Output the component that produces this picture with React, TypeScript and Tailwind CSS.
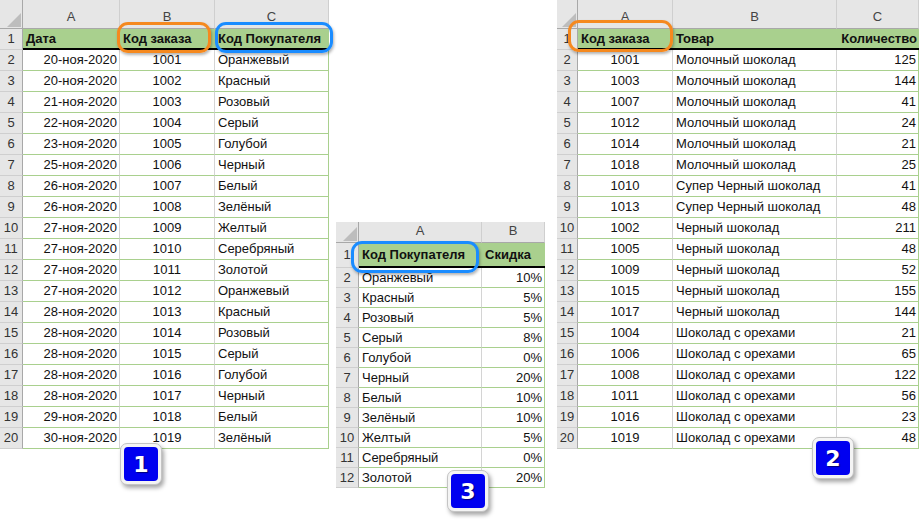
import type { ReactNode } from "react";

type Align = "l" | "c" | "r";
type Col = { letter: string; w: string; align: Align; head: Align };

const alignCls: Record<Align, string> = {
  l: "justify-start pl-[3px]",
  c: "justify-center",
  r: "justify-end pr-[2px]",
};

function cn(...a: (string | false | undefined)[]) {
  return a.filter(Boolean).join(" ");
}

function Sheet({
  numW,
  topH,
  headH,
  rowH,
  cols,
  head,
  rows,
  children,
}: {
  numW: string;
  topH: string;
  headH: string;
  rowH: string;
  cols: Col[];
  head: string[];
  rows: string[][];
  children?: ReactNode;
}) {
  return (
    <div className="relative flex flex-col text-[13px] text-[#111] font-['Liberation_Sans',Arial,sans-serif]">
      {/* column letters */}
      <div className={cn("flex", topH)}>
        <div className={cn("flex items-end justify-end p-[1px] bg-[#e6e6e6] border-r border-b border-[#a8a8a8]", numW)}>
          <svg width="14" height="14" viewBox="0 0 14 14">
            <polygon points="14,0 14,14 0,14" fill="#bdbdbd" />
          </svg>
        </div>
        {cols.map((c) => (
          <div
            key={c.letter}
            className={cn("flex items-end justify-center pb-[2px] bg-[#e6e6e6] border-r border-[#cfcfcf] border-b border-b-[#a8a8a8] text-[#444]", c.w)}
          >
            {c.letter}
          </div>
        ))}
      </div>
      {/* header row */}
      <div className={cn("flex", headH)}>
        <div className={cn("flex items-center justify-center bg-[#e6e6e6] border-r border-r-[#a8a8a8] border-b border-b-[#cfcfcf] text-[#333]", numW)}>
          1
        </div>
        {cols.map((c, i) => (
          <div
            key={c.letter}
            className={cn("flex items-center font-bold bg-[#a9d08e] border-b-2 border-black whitespace-nowrap", alignCls[c.head], c.w)}
          >
            {head[i]}
          </div>
        ))}
      </div>
      {/* data rows */}
      {rows.map((r, ri) => (
        <div key={ri} className={cn("flex", rowH)}>
          <div className={cn("flex items-center justify-center bg-[#e6e6e6] border-r border-r-[#a8a8a8] border-b border-b-[#cfcfcf] text-[#333]", numW)}>
            {ri + 2}
          </div>
          {cols.map((c, ci) => (
            <div
              key={c.letter}
              className={cn(
                "flex items-center border-b border-b-[#a9d08e] whitespace-nowrap",
                ci === cols.length - 1 ? "border-r border-r-[#a9d08e]" : "border-r border-r-[#d4d4d4]",
                alignCls[c.align],
                c.w
              )}
            >
              {r[ci]}
            </div>
          ))}
        </div>
      ))}
      {children}
    </div>
  );
}

function Oval({ pos, color }: { pos: string; color: "orange" | "blue" }) {
  return (
    <div
      className={cn(
        "absolute rounded-[11px] border-[3px] shadow-[1px_2px_3px_rgba(0,0,0,0.3)]",
        color === "orange" ? "border-[#f5891f]" : "border-[#1a8cff]",
        pos
      )}
    />
  );
}

function Badge({ pos, n }: { pos: string; n: string }) {
  return (
    <div
      className={cn(
        "absolute w-[42px] h-[42px] p-[3px] rounded-[7px] bg-[#f4f4f4] border border-[#c4c4c4] shadow-[2px_3px_4px_rgba(0,0,0,0.35)]",
        pos
      )}
    >
      <div className="w-full h-full flex items-center justify-center rounded-[4px] bg-[#0000f0] text-white font-bold text-[22px] font-['DejaVu_Sans',sans-serif] [text-shadow:1px_1px_1px_rgba(0,0,0,0.5)]">
        {n}
      </div>
    </div>
  );
}

const orders = [
  ["20-ноя-2020", "1001", "Оранжевый"],
  ["20-ноя-2020", "1002", "Красный"],
  ["21-ноя-2020", "1003", "Розовый"],
  ["22-ноя-2020", "1004", "Серый"],
  ["23-ноя-2020", "1005", "Голубой"],
  ["25-ноя-2020", "1006", "Черный"],
  ["26-ноя-2020", "1007", "Белый"],
  ["26-ноя-2020", "1008", "Зелёный"],
  ["27-ноя-2020", "1009", "Желтый"],
  ["27-ноя-2020", "1010", "Серебряный"],
  ["27-ноя-2020", "1011", "Золотой"],
  ["27-ноя-2020", "1012", "Оранжевый"],
  ["28-ноя-2020", "1013", "Красный"],
  ["28-ноя-2020", "1014", "Розовый"],
  ["28-ноя-2020", "1015", "Серый"],
  ["28-ноя-2020", "1016", "Голубой"],
  ["28-ноя-2020", "1017", "Черный"],
  ["29-ноя-2020", "1018", "Белый"],
  ["30-ноя-2020", "1019", "Зелёный"],
];

const items = [
  ["1001", "Молочный шоколад", "125"],
  ["1003", "Молочный шоколад", "144"],
  ["1007", "Молочный шоколад", "41"],
  ["1012", "Молочный шоколад", "24"],
  ["1014", "Молочный шоколад", "21"],
  ["1018", "Молочный шоколад", "25"],
  ["1010", "Супер Черный шоколад", "41"],
  ["1013", "Супер Черный шоколад", "48"],
  ["1002", "Черный шоколад", "211"],
  ["1005", "Черный шоколад", "48"],
  ["1009", "Черный шоколад", "52"],
  ["1015", "Черный шоколад", "155"],
  ["1017", "Черный шоколад", "144"],
  ["1004", "Шоколад с орехами", "21"],
  ["1006", "Шоколад с орехами", "65"],
  ["1008", "Шоколад с орехами", "122"],
  ["1011", "Шоколад с орехами", "56"],
  ["1016", "Шоколад с орехами", "23"],
  ["1019", "Шоколад с орехами", "48"],
];

const discounts = [
  ["Оранжевый", "10%"],
  ["Красный", "5%"],
  ["Розовый", "5%"],
  ["Серый", "8%"],
  ["Голубой", "0%"],
  ["Черный", "20%"],
  ["Белый", "10%"],
  ["Зелёный", "10%"],
  ["Желтый", "5%"],
  ["Серебряный", "0%"],
  ["Золотой", "20%"],
];

export default function App() {
  return (
    <div className="w-[922px] h-[531px] bg-white flex items-start overflow-hidden">
      <div className="w-[329px] shrink-0">
        <Sheet
          numW="w-[23px]"
          topH="h-[29px]"
          headH="h-[21px]"
          rowH="h-[21px]"
          cols={[
            { letter: "A", w: "w-[97px]", align: "r", head: "l" },
            { letter: "B", w: "w-[95px]", align: "c", head: "l" },
            { letter: "C", w: "w-[114px]", align: "l", head: "l" },
          ]}
          head={["Дата", "Код заказа", "Код Покупателя"]}
          rows={orders}
        >
          <Oval pos="left-[117px] top-[22px] w-[94px] h-[31px]" color="orange" />
          <Oval pos="left-[215px] top-[22px] w-[118px] h-[31px]" color="blue" />
          <Badge pos="left-[120px] top-[443px]" n="1" />
        </Sheet>
      </div>

      <div className="w-[209px] shrink-0 ml-[7px] mt-[222px]">
        <Sheet
          numW="w-[23px]"
          topH="h-[21px]"
          headH="h-[25px]"
          rowH="h-[20px]"
          cols={[
            { letter: "A", w: "w-[123px]", align: "l", head: "l" },
            { letter: "B", w: "w-[63px]", align: "r", head: "l" },
          ]}
          head={["Код Покупателя", "Скидка"]}
          rows={discounts}
        >
          <Oval pos="left-[15px] top-[19px] w-[128px] h-[32px]" color="blue" />
          <Badge pos="left-[111px] top-[248px]" n="3" />
        </Sheet>
      </div>

      <div className="w-[362px] shrink-0 ml-[12px]">
        <Sheet
          numW="w-[21px]"
          topH="h-[29px]"
          headH="h-[21px]"
          rowH="h-[21px]"
          cols={[
            { letter: "A", w: "w-[95px]", align: "c", head: "l" },
            { letter: "B", w: "w-[164px]", align: "l", head: "l" },
            { letter: "C", w: "w-[82px]", align: "r", head: "r" },
          ]}
          head={["Код заказа", "Товар", "Количество"]}
          rows={items}
        >
          <Oval pos="left-[11px] top-[20px] w-[105px] h-[32px]" color="orange" />
          <Badge pos="left-[255px] top-[437px]" n="2" />
        </Sheet>
      </div>
    </div>
  );
}
